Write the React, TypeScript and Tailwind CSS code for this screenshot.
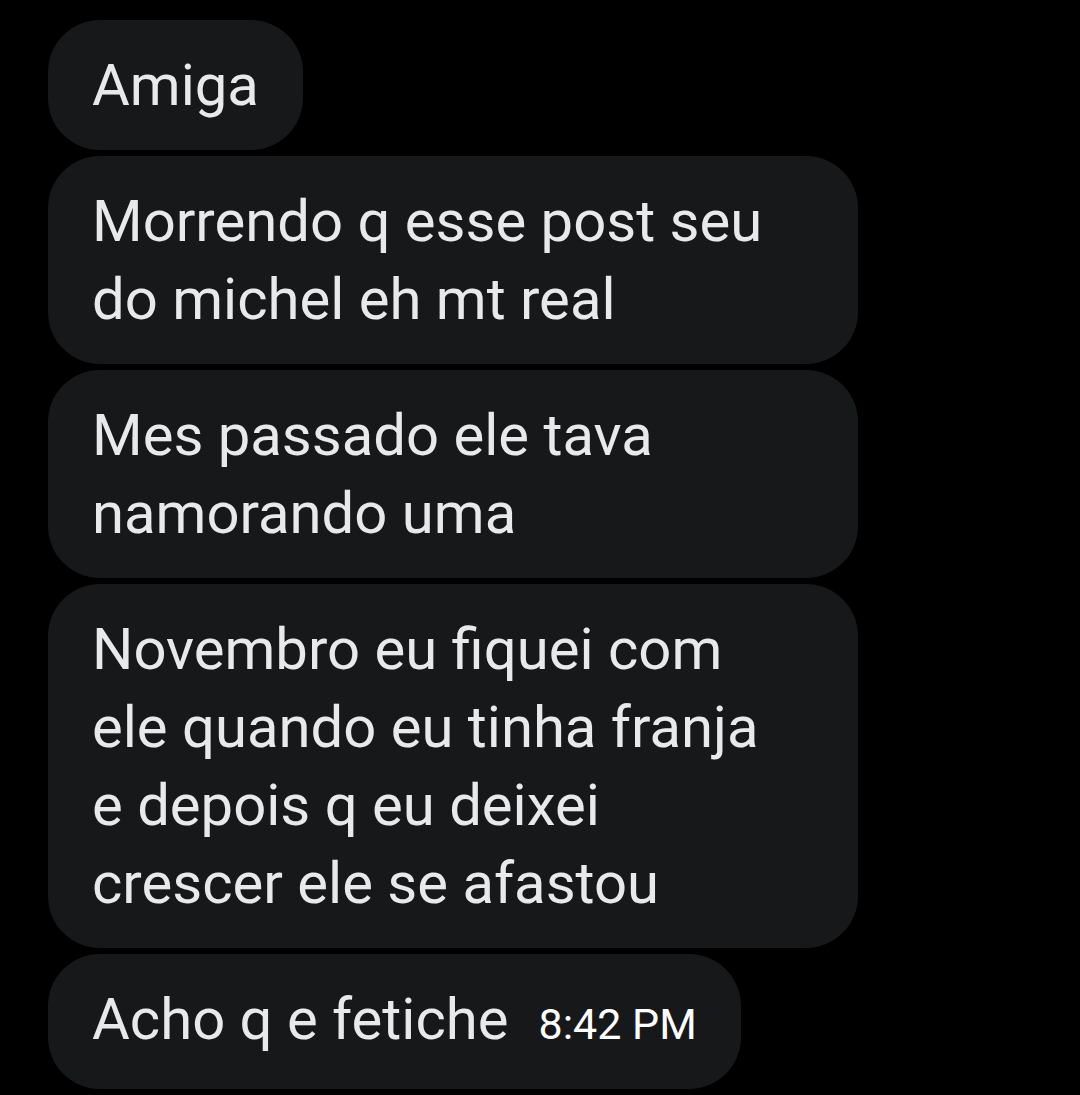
const MESSAGES = [
  'Morrendo q esse post seu do michel eh mt real',
  'Mes passado ele tava namorando uma',
  'Novembro eu fiquei com ele quando eu tinha franja e depois q eu deixei crescer ele se afastou',
]

function Bubble({ children, wide }: { children: React.ReactNode; wide?: boolean }) {
  return (
    <div
      className={
        'rounded-[52px] bg-[#17181a] px-[44px] py-[26px] text-[58px] leading-[78px] text-[#e7e9ea] ' +
        (wide ? 'w-[810px]' : '')
      }
    >
      {children}
    </div>
  )
}

export default function App() {
  return (
    <div
      className="min-h-[1095px] w-[1080px] bg-black pl-[48px] pt-[20px]"
      style={{ fontFamily: 'Roboto, "Liberation Sans", sans-serif' }}
    >
      <div className="flex flex-col items-start gap-[6px]">
        <Bubble>Amiga</Bubble>
        {MESSAGES.map((m) => (
          <Bubble key={m} wide>
            <p className="max-w-[700px]">{m}</p>
          </Bubble>
        ))}
        <Bubble>
          <span>Acho q e fetiche</span>
          <span className="ml-[30px] text-[43px] text-white">8:42 PM</span>
        </Bubble>
      </div>
    </div>
  )
}
